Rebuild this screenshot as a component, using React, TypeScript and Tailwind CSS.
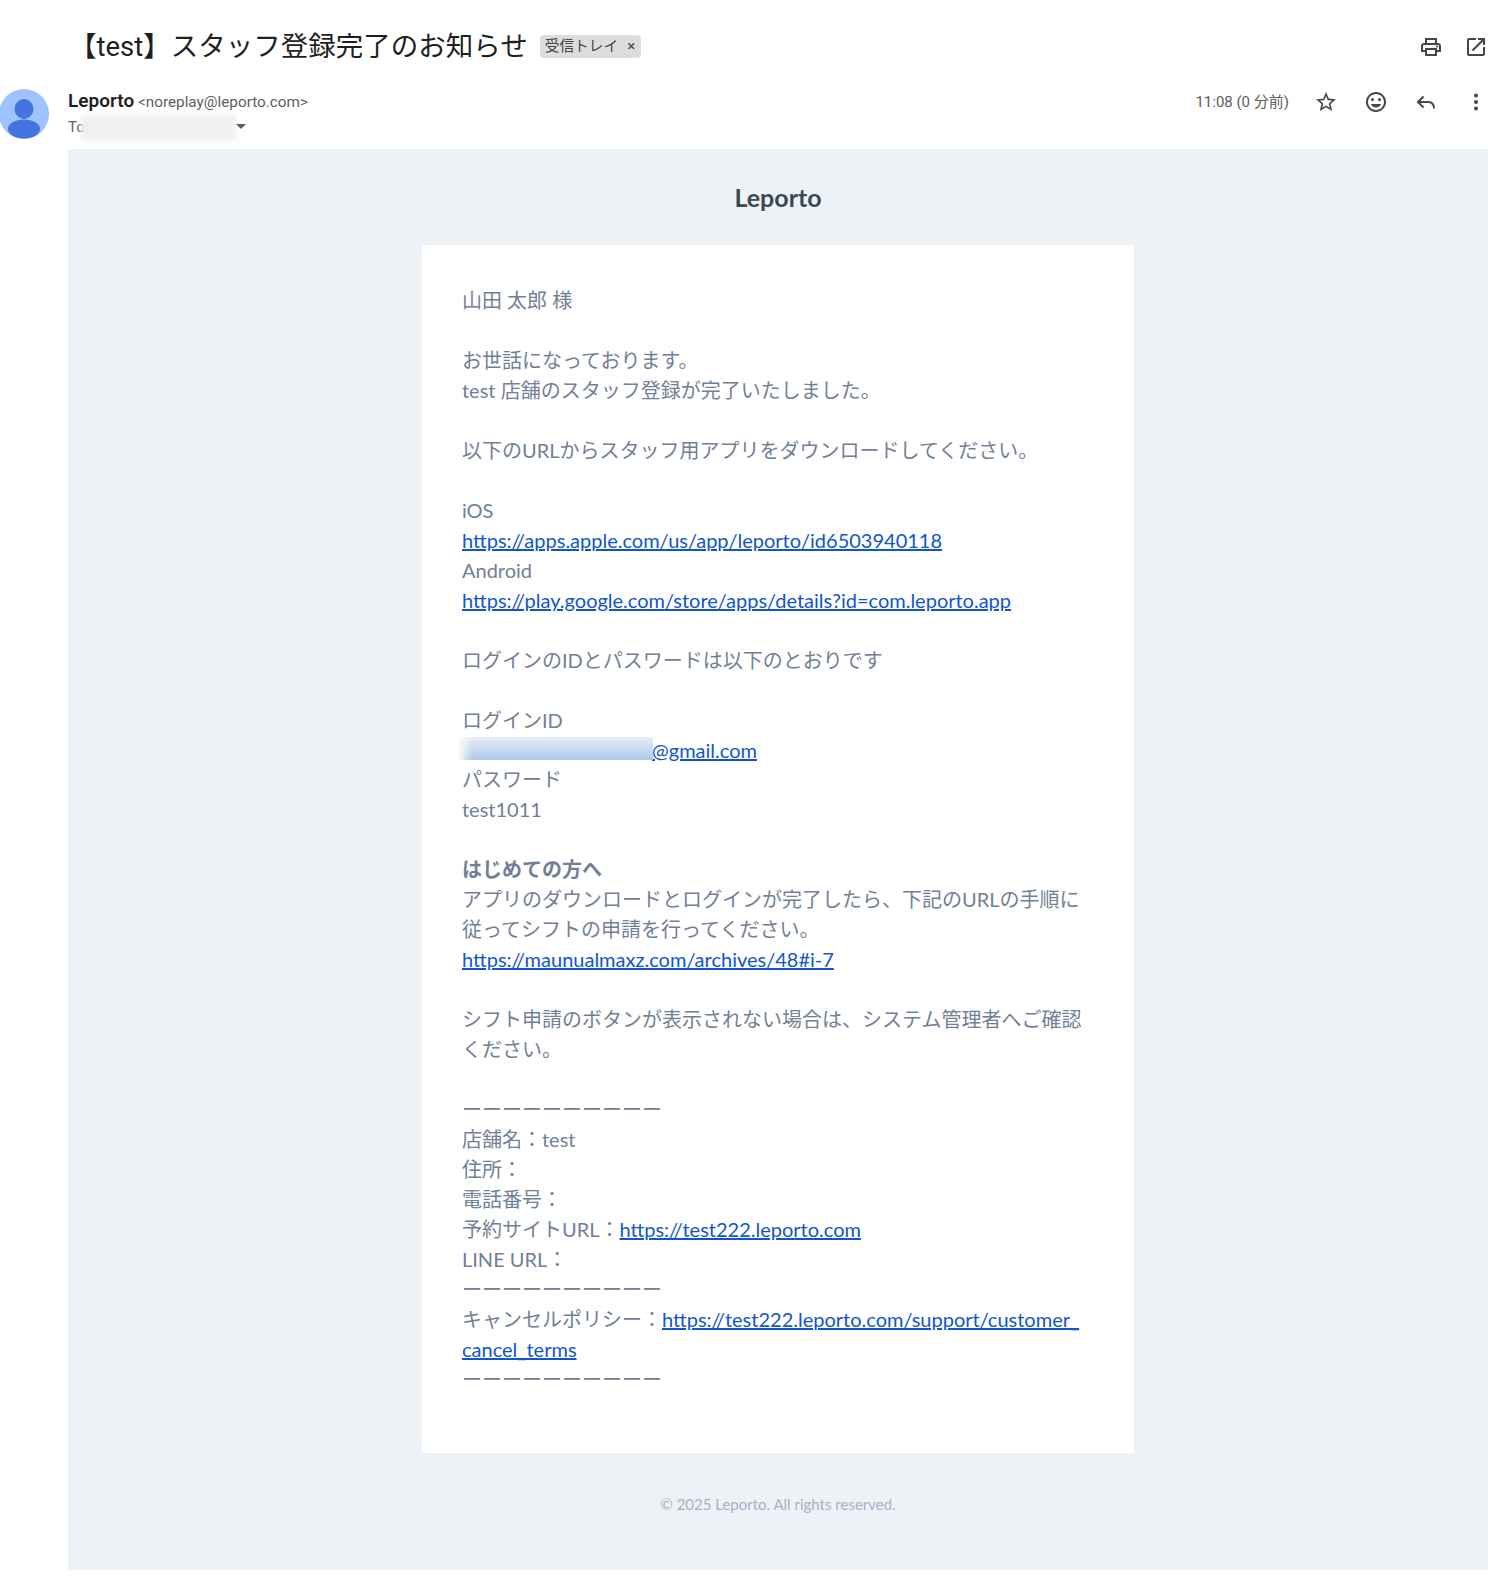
const bodyFont = "font-['Lato','Noto_Sans_CJK_JP',sans-serif]";

function Icon({ d, size = 24, children }: { d?: string; size?: number; children?: React.ReactNode }) {
  return (
    <svg width={size} height={size} viewBox="0 0 24 24" fill="currentColor" className="shrink-0">
      {d && <path d={d} />}
      {children}
    </svg>
  );
}

function Link({ children }: { children: React.ReactNode }) {
  return <a className="text-[#1155cc] underline">{children}</a>;
}

function Dashes() {
  return <p>ーーーーーーーーーー</p>;
}

export default function App() {
  return (
    <div className="w-[1488px] h-[1580px] bg-white overflow-hidden font-['Roboto','Noto_Sans_CJK_JP',sans-serif]">
      <header className="h-[149px] flex flex-col">
        <div className="h-[91px] flex items-start justify-between pt-[30px] text-[#444746]">
          <div className="flex items-center pl-[69px]">
            <h1 className="text-[27.5px] leading-[34px] text-[#1f1f1f]">【test】スタッフ登録完了のお知らせ</h1>
            <span className="ml-[12px] h-[23px] -mt-[1px] pl-[5px] pr-[6px] flex items-center gap-[9px] rounded-[4px] bg-[#dddedb] text-[14.7px] text-[#444746]">
              受信トレイ
              <span className="text-[15px]">×</span>
            </span>
          </div>
          <div className="flex items-center gap-[21px] pt-[5px]">
            <Icon d="M19 8h-1V3H6v5H5c-1.66 0-3 1.34-3 3v6h4v4h12v-4h4v-6c0-1.66-1.34-3-3-3zM8 5h8v3H8V5zm8 12v2H8v-4h8v2zm2-2v-2H6v2H4v-4c0-.55.45-1 1-1h14c.55 0 1 .45 1 1v4h-2z">
              <circle cx="18" cy="11.5" r="1" />
            </Icon>
            <Icon d="M19 19H5V5h7V3H5c-1.11 0-2 .9-2 2v14c0 1.1.89 2 2 2h14c1.1 0 2-.9 2-2v-7h-2v7zM14 3v2h3.59l-9.83 9.83 1.41 1.41L19 6.41V10h2V3h-7z" />
          </div>
        </div>
        <div className="flex justify-between items-start">
          <div className="flex items-start">
            <svg width="50" height="50" viewBox="0 0 50 50" className="-ml-[1px] -mt-[2px] shrink-0">
              <circle cx="25" cy="25" r="25" fill="#a0c3ff" />
              <ellipse cx="25" cy="20" rx="9.5" ry="10" fill="#4374e0" />
              <ellipse cx="25" cy="40" rx="16" ry="9.5" fill="#4374e0" />
            </svg>
            <div className="ml-[19px] relative">
              <p className="text-[15.3px] leading-[20px] text-[#5e5e5e]">
                <b className="text-[19px] font-semibold text-[#1f1f1f]">Leporto</b>{" "}
                &lt;noreplay@leporto.com&gt;
              </p>
              <div className="flex items-center mt-[5px] text-[15px] leading-[20px] text-[#5e5e5e]">
                <span>To</span>
                <span className="absolute left-[13px] top-[23px] w-[155px] h-[27px] bg-[#f1f1f1] blur-[2px]" />
                <span className="absolute left-[168px] top-[33px] border-x-[5px] border-t-[5px] border-x-transparent border-t-[#5e5e5e]" />
              </div>
            </div>
          </div>
          <div className="flex items-center text-[#444746] -mt-[1px]">
            <span className="text-[15px] text-[#5e5e5e] mr-[25px]">11:08 (0 分前)</span>
            <div className="flex items-center gap-[26px]">
              <Icon d="M22 9.24l-7.19-.62L12 2 9.19 8.63 2 9.24l5.46 4.73L5.82 21 12 17.27 18.18 21l-1.63-7.03L22 9.24zM12 15.4l-3.76 2.27 1-4.28-3.32-2.88 4.38-.38L12 6.1l1.71 4.04 4.38.38-3.32 2.88 1 4.28L12 15.4z" />
              <Icon d="M11.99 2C6.47 2 2 6.48 2 12s4.47 10 9.99 10C17.52 22 22 17.52 22 12S17.52 2 11.99 2zM12 20c-4.42 0-8-3.58-8-8s3.58-8 8-8 8 3.58 8 8-3.58 8-8 8z">
                <circle cx="15.5" cy="9.5" r="1.5" />
                <circle cx="8.5" cy="9.5" r="1.5" />
                <path d="M12 17.5c2.33 0 4.31-1.46 5.11-3.5H6.89c.8 2.04 2.78 3.5 5.11 3.5z" />
              </Icon>
              <svg width="24" height="24" viewBox="0 0 24 24" fill="none" stroke="currentColor" strokeWidth="2" className="shrink-0">
                <path d="M9.5 6.5L4 12l5.5 5.5M4 12h10c3.5 0 6 2.2 6 6.5" />
              </svg>
              <Icon size={24}>
                <circle cx="12" cy="5.5" r="2" />
                <circle cx="12" cy="12" r="2" />
                <circle cx="12" cy="18.5" r="2" />
              </Icon>
            </div>
          </div>
        </div>
      </header>

      <main className={`ml-[68px] h-[1421px] bg-[#edf2f7] flex flex-col items-center ${bodyFont}`}>
        <h2 className="mt-[31px] text-[25px] leading-[34px] font-bold text-[#3d4852]">Leporto</h2>
        <section className="relative mt-[31px] w-[712px] h-[1208px] bg-white p-[40px] text-[20px] leading-[30px] text-[#718096]">
          <p>山田 太郎 様</p>
          <br />
          <p>お世話になっております。</p>
          <p>test 店舗のスタッフ登録が完了いたしました。</p>
          <br />
          <p>以下のURLからスタッフ用アプリをダウンロードしてください。</p>
          <br />
          <p>iOS</p>
          <p><Link>https://apps.apple.com/us/app/leporto/id6503940118</Link></p>
          <p>Android</p>
          <p><Link>https://play.google.com/store/apps/details?id=com.leporto.app</Link></p>
          <br />
          <p>ログインのIDとパスワードは以下のとおりです</p>
          <br />
          <p>ログインID</p>
          <p className="pl-[190px]"><Link>@gmail.com</Link></p>
          <p className="-mt-[1px]">パスワード</p>
          <p>test1011</p>
          <br />
          <p className="font-bold">はじめての方へ</p>
          <p>アプリのダウンロードとログインが完了したら、下記のURLの手順に<br />従ってシフトの申請を行ってください。</p>
          <p><Link>https://maunualmaxz.com/archives/48#i-7</Link></p>
          <br />
          <p>シフト申請のボタンが表示されない場合は、システム管理者へご確認<br />ください。</p>
          <br />
          <Dashes />
          <p>店舗名：test</p>
          <p>住所：</p>
          <p>電話番号：</p>
          <p>予約サイトURL：<Link>https://test222.leporto.com</Link></p>
          <p>LINE URL：</p>
          <Dashes />
          <p>キャンセルポリシー：<Link>https://test222.leporto.com/support/customer_<br />cancel_terms</Link></p>
          <Dashes />
          <span className="absolute left-[35px] top-[492px] w-[196px] h-[23px] bg-gradient-to-b from-[#e8eef8] to-[#aec6ea]">
            <span className="block w-[16px] h-full bg-gradient-to-r from-white to-transparent" />
          </span>
        </section>
        <p className="mt-[41px] text-[15px] leading-[20px] text-[#b0adc5]">© 2025 Leporto. All rights reserved.</p>
      </main>
    </div>
  );
}
